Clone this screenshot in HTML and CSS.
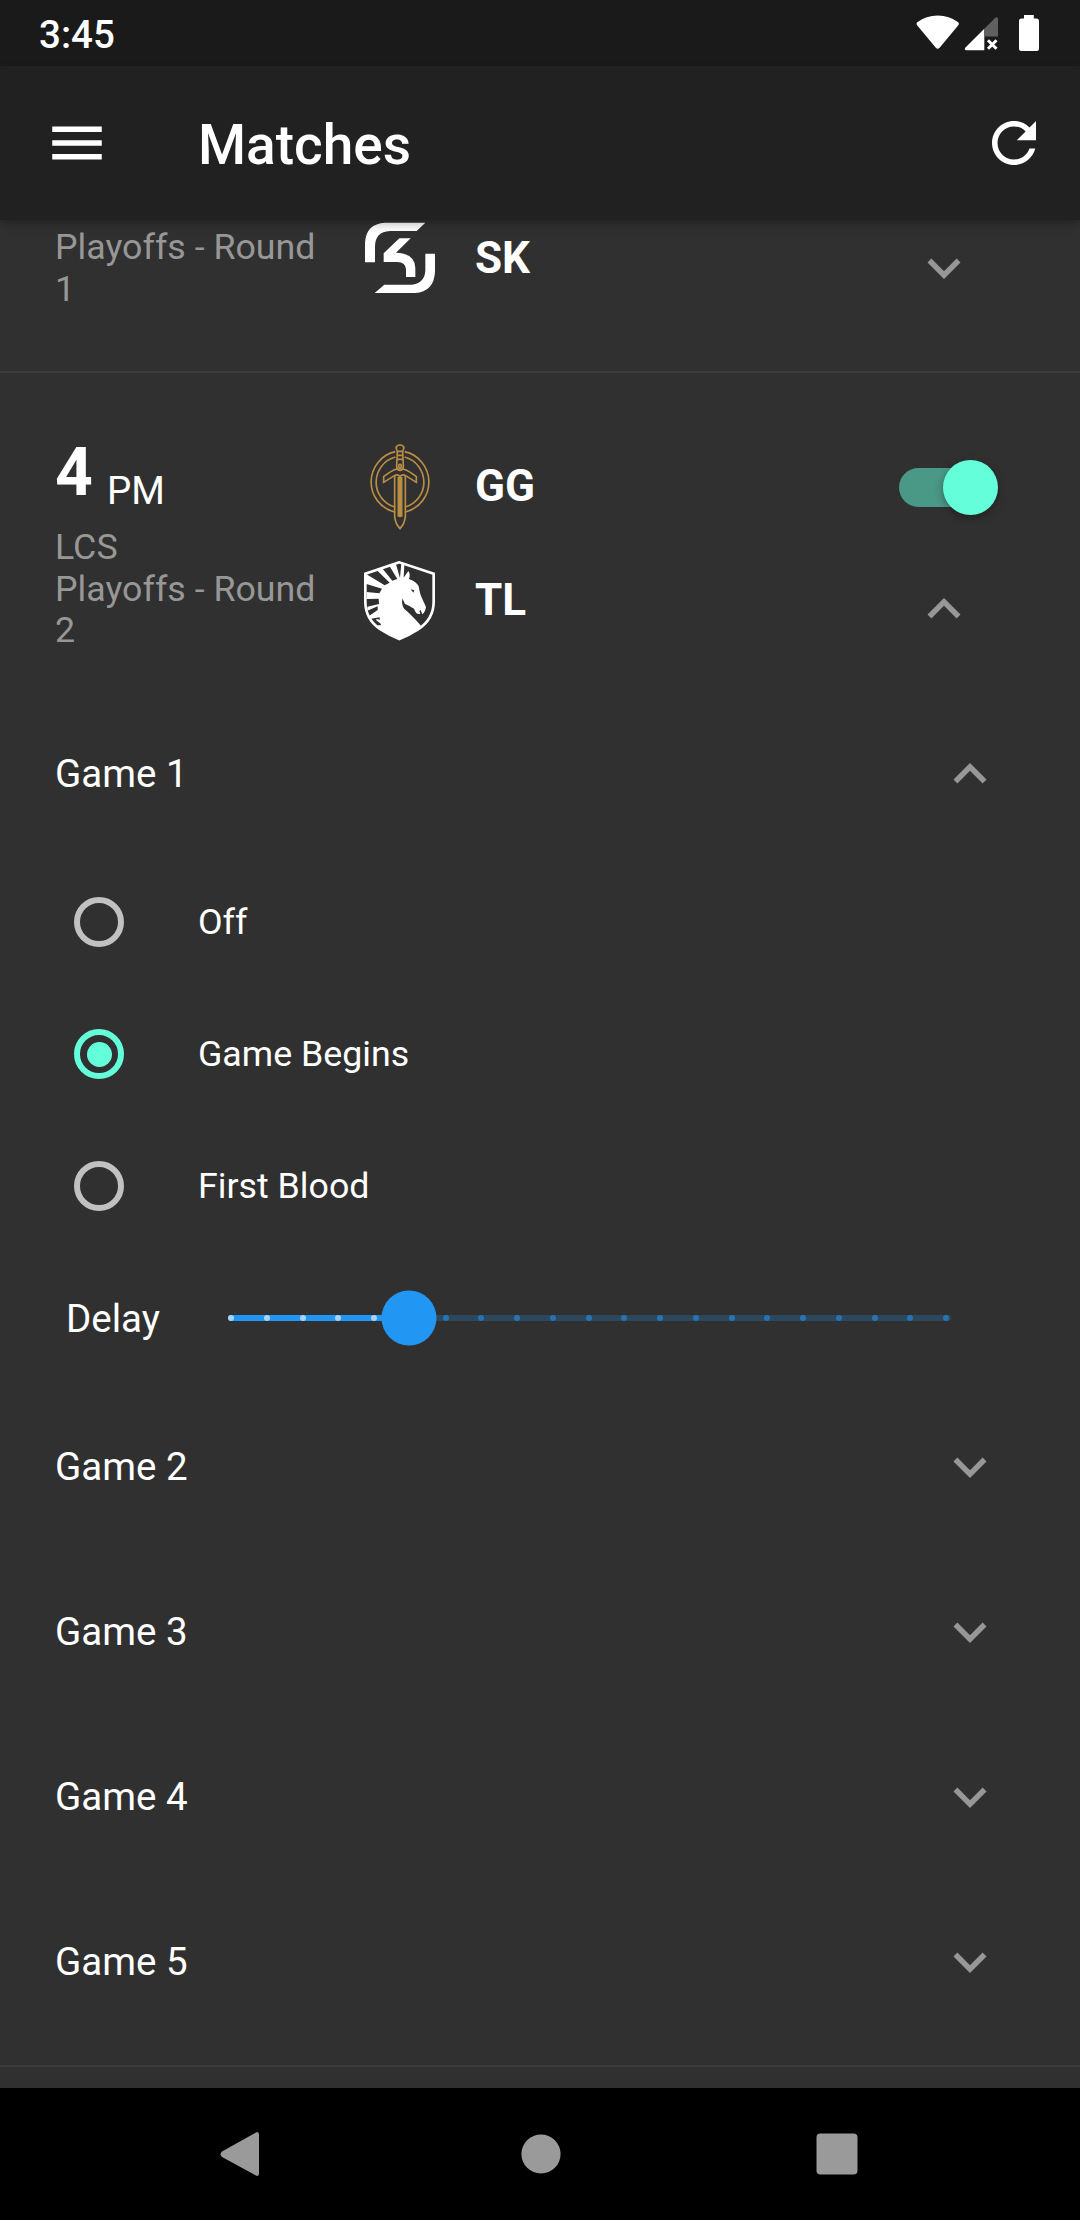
FILE: index.html
```html
<!DOCTYPE html>
<html lang="en">
<head>
<meta charset="utf-8">
<title>Matches</title>
<link rel="stylesheet" href="styles.css">
</head>
<body>
<svg class="defs" aria-hidden="true">
  <symbol id="chevron" viewBox="0 0 24 24"><path d="M16.59 8.59L12 13.17 7.41 8.59 6 10l6 6 6-6z"/></symbol>
</svg>
<div class="screen">
  <div class="status-bar">
    <span class="clock">3:45</span>
    <svg class="status-icons" viewBox="912 8 132 50">
      <path d="M917.3 25.6Q915.6 23.400 917.600 22Q926 15.400 937.700 15.400Q949.500 15.400 957.800 22Q959.800 23.400 958.100 25.600L939.600 47.800Q937.700 49.800 935.800 47.800Z"/>
      <path d="M984.300 28.700V50.300H966.500Q963.700 50 965.500 47.500Z"/>
      <path class="dim" d="M984.300 28.700L994.800 18.200Q997.900 15.800 998 19V36.600H984.300Z"/>
      <path class="cross" d="M988 40.300L996.500 48.800M996.500 40.300L988 48.800"/>
      <path d="M1024 15H1033.800V18.500H1036.500Q1039 18.500 1039 21V48.500Q1039 51 1036.500 51H1021.500Q1019 51 1019 48.500V21Q1019 18.500 1021.500 18.500H1024Z"/>
    </svg>
  </div>
  <header class="app-bar">
    <svg class="icon menu" viewBox="0 0 24 24"><path d="M3 18h18v-2H3v2zm0-5h18v-2H3v2zm0-7v2h18V6H3z"/></svg>
    <h1 class="title">Matches</h1>
    <svg class="icon" viewBox="0 0 24 24"><path d="M17.65 6.350C16.200 4.900 14.210 4 12 4c-4.420 0-7.990 3.580-7.990 8s3.570 8 7.990 8c3.730 0 6.840-2.550 7.730-6h-2.080c-.82 2.330-3.040 4-5.650 4-3.310 0-6-2.690-6-6s2.690-6 6-6c1.660 0 3.140.69 4.220 1.780L13 11h7V4l-2.350 2.350z"/></svg>
  </header>

  <main class="list">
    <section class="match match-partial">
      <div class="meta"><p class="league">Playoffs - Round 1</p></div>
      <div class="teams">
        <div class="team">
          <svg class="logo logo-sk" viewBox="60 60 240 228">
            <path d="M75 187V128Q78 71 135 68H256L230 93H150Q105 95 105 140V187Z"/>
            <path d="M178 115H212L168 158Q225 160 226 204V231H198V208Q197 187 172 186H131V160Z"/>
            <path d="M285 161V215Q282 275 225 279H104L133 254H215Q255 250 256 210V161Z"/>
          </svg>
          <span class="name">SK</span>
        </div>
      </div>
      <div class="controls"><svg class="chevron"><use href="#chevron"/></svg></div>
    </section>

    <section class="match match-open">
      <div class="meta">
        <p class="time"><span class="hour">4</span><span class="ampm">PM</span></p>
        <p class="league">LCS</p>
        <p class="league">Playoffs - Round 2</p>
      </div>
      <div class="teams">
        <div class="team">
          <svg class="logo logo-gg" viewBox="60 66 240 264">
            <path d="M166 95A93 93 0 0 0 164 276M194 95A93 93 0 0 1 196 276M166 111A78 78 0 0 0 164 261M194 111A78 78 0 0 1 196 261"/>
            <path d="M172 93L168 84Q170 75 180 75Q190 75 192 84L188 93L190 140Q188 149 180 151Q172 149 170 140Z"/>
            <path d="M172 94H188M172 106H188M171 118H189M176 136Q180 130 184 136Q184 144 180 145Q176 144 176 136"/>
            <path d="M170 147Q155 151 131 170V187L163 167Q174 161 180 170Q186 161 197 167L229 187V170Q205 151 190 147Q180 156 170 147Z"/>
            <path d="M164 168V290Q166 311 180 326Q194 311 196 290V168M175 170V290M185 170V290M180 170V292"/>
          </svg>
          <span class="name">GG</span>
        </div>
        <div class="team">
          <svg class="logo logo-tl" viewBox="60 414 240 252">
            <path class="shield" d="M178 427L76 461V545C76 588 96 611 122 628Q150 646 178 657Q206 646 234 628C260 611 281 588 281 545V461Z"/>
            <path d="M178 657Q120 634 111 615Q126 618 122 611L108 600Q110 594 119 601V592L89 597L87 588L113 570V559L82 572V560L117 552L116 536L80 537V516L118 520L126 506L77 491V461L134 496L149 488L110 450L126 444L157 482L172 477L147 436L167 430L180 474L184 430L193 434L191 473L205 453Q212 462 207 477Q230 486 236 499Q240 524 246 535L258 561Q256 576 247 583L242 570L238 573L241 581Q231 584 226 575L222 566Q208 557 195 552L187 535Q184 556 193 567Q211 581 243 617Q220 642 178 657Z"/>
            <path class="cut" d="M212 508L223 511L220 518Z"/>
          </svg>
          <span class="name">TL</span>
        </div>
      </div>
      <div class="controls">
        <span class="switch"><span class="switch-thumb"></span></span>
        <svg class="chevron up"><use href="#chevron"/></svg>
      </div>
    </section>

    <section class="games">
      <div class="game"><span>Game 1</span><svg class="chevron up"><use href="#chevron"/></svg></div>
      <div class="option"><span class="radio"></span><span>Off</span></div>
      <div class="option"><span class="radio selected"></span><span>Game Begins</span></div>
      <div class="option"><span class="radio"></span><span>First Blood</span></div>
      <div class="delay">
        <span class="delay-label">Delay</span>
        <div class="slider">
          <div class="ticks">
            <i class="on"></i><i class="on"></i><i class="on"></i><i class="on"></i><i class="on"></i><i></i><i></i><i></i><i></i><i></i><i></i><i></i><i></i><i></i><i></i><i></i><i></i><i></i><i></i><i></i><i></i>
          </div>
          <span class="slider-thumb"></span>
        </div>
      </div>
      <div class="game"><span>Game 2</span><svg class="chevron"><use href="#chevron"/></svg></div>
      <div class="game"><span>Game 3</span><svg class="chevron"><use href="#chevron"/></svg></div>
      <div class="game"><span>Game 4</span><svg class="chevron"><use href="#chevron"/></svg></div>
      <div class="game"><span>Game 5</span><svg class="chevron"><use href="#chevron"/></svg></div>
    </section>
  </main>

  <nav class="nav-bar">
    <svg viewBox="0 0 48 48"><path d="M40 2.500Q43 1 43 5V43.500Q43 47 40 45.500L6 27Q3 24.300 6 21.500Z"/></svg>
    <svg class="home" viewBox="0 0 48 48"><circle cx="24" cy="24" r="19.600"/></svg>
    <svg viewBox="0 0 48 48"><rect x="3.500" y="3.500" width="41" height="41" rx="4"/></svg>
  </nav>
</div>
</body>
</html>
```
FILE: styles.css
```css
* { box-sizing: border-box; }

body {
  margin: 0;
  background: #303030;
  color: #fff;
  font-family: Roboto, sans-serif;
  font-size: 38.5px;
}

p, h1 { margin: 0; }
svg { display: block; fill: #fff; }
.defs { display: none; }

.screen {
  display: flex;
  flex-direction: column;
  width: 1080px;
  height: 2220px;
  overflow: hidden;
}

.status-bar {
  display: flex;
  flex: none;
  justify-content: space-between;
  height: 66px;
  padding: 8px 36px 0 39px;
  background: #1a1a1a;
}
.clock { font-weight: 500; line-height: 53px; }
.status-icons { width: 132px; height: 50px; }
.status-icons .dim { fill: #606060; }
.status-icons .cross { fill: none; stroke: #fff; stroke-width: 3; }

.app-bar {
  display: flex;
  flex: none;
  align-items: center;
  height: 154px;
  padding: 0 33px 0 44px;
  background: #212121;
  box-shadow: 0 4px 10px -1px rgba(0, 0, 0, .32);
  z-index: 1;
}
.icon { width: 66px; height: 66px; }
.menu { margin-right: 88px; }
.title { flex: 1; font-size: 55px; font-weight: 500; line-height: 66px; padding-top: 4px; }

.list { flex: 1; min-height: 0; }

.match {
  display: grid;
  grid-template-columns: 275px 1fr 162px;
  column-gap: 30px;
  padding: 0 55px;
}
.match-partial { height: 153px; border-bottom: 2px solid #3b3b3b; }
.match-open { height: 318px; }

.league { color: #979797; font-size: 35.75px; line-height: 41.600px; }
.match-partial .meta { padding-top: 7px; }
.match-open .meta { padding-top: 64px; }
.time { display: flex; height: 90px; gap: 14px; }
.hour { font-size: 66px; font-weight: 700; line-height: 72px; }
.ampm { line-height: 108px; }

.teams { display: flex; flex-direction: column; gap: 28px; }
.match-open .teams { padding-top: 69px; }
.team { display: flex; align-items: center; gap: 35px; }
.logo { width: 80px; }
.logo-sk { height: 76px; }
.logo-gg { height: 88px; fill: none; stroke: #b88e47; stroke-width: 5; }
.logo-tl { height: 84px; }
.logo-tl .shield { fill: none; stroke: #fff; stroke-width: 8; }
.logo-tl .cut { fill: #303030; }
.name { font-size: 44px; font-weight: 700; line-height: 50px; }

.controls { display: flex; flex-direction: column; align-items: center; }
.match-partial .controls { padding-top: 15px; }
.match-open .controls { padding-top: 95px; gap: 69px; }
.chevron { width: 66px; height: 66px; fill: #979797; }
.up { transform: rotate(180deg); }

.switch {
  display: flex;
  align-items: center;
  justify-content: flex-end;
  width: 91px;
  height: 39px;
  border-radius: 20px;
  background: #4a9886;
}
.switch-thumb {
  flex: none;
  width: 55px;
  height: 55px;
  margin-right: -8px;
  border-radius: 50%;
  background: #64ffda;
  box-shadow: 0 3px 8px rgba(0, 0, 0, .32);
}

.games { height: 1376px; border-bottom: 2px solid #3b3b3b; }
.game {
  display: flex;
  align-items: center;
  justify-content: space-between;
  height: 165px;
  padding: 0 77px 0 55px;
}
.option {
  display: flex;
  align-items: center;
  gap: 74px;
  height: 132px;
  padding-left: 74px;
  font-size: 35.75px;
}
.radio {
  display: flex;
  align-items: center;
  justify-content: center;
  width: 50px;
  height: 50px;
  border: 6px solid #c1c1c1;
  border-radius: 50%;
}
.radio.selected { border-color: #64ffda; }
.radio.selected::before {
  content: "";
  width: 25px;
  height: 25px;
  border-radius: 50%;
  background: #64ffda;
}

.delay {
  display: flex;
  align-items: center;
  height: 132px;
  padding: 0 129px 0 66px;
}
.delay-label { width: 162px; }
.slider {
  position: relative;
  flex: 1;
  height: 6px;
  border-radius: 3px;
  background: linear-gradient(90deg, #2196f3 25%, #2c485f 25%);
}
.ticks { display: flex; justify-content: space-between; padding-right: 2px; }
.ticks i { width: 6px; height: 6px; border-radius: 50%; background: #2674b5; }
.ticks .on { background: #a6d4fa; }
.slider-thumb {
  position: absolute;
  top: 50%;
  left: 25%;
  width: 55px;
  height: 55px;
  border-radius: 50%;
  background: #2196f3;
  transform: translate(-50%, -50%);
}

.nav-bar {
  display: flex;
  flex: none;
  align-items: center;
  justify-content: space-between;
  height: 132px;
  padding: 0 219px 0 216px;
  background: #000;
}
.nav-bar svg { width: 48px; height: 48px; fill: #9a9a9a; }
.nav-bar .home { margin-left: 4px; }
```
